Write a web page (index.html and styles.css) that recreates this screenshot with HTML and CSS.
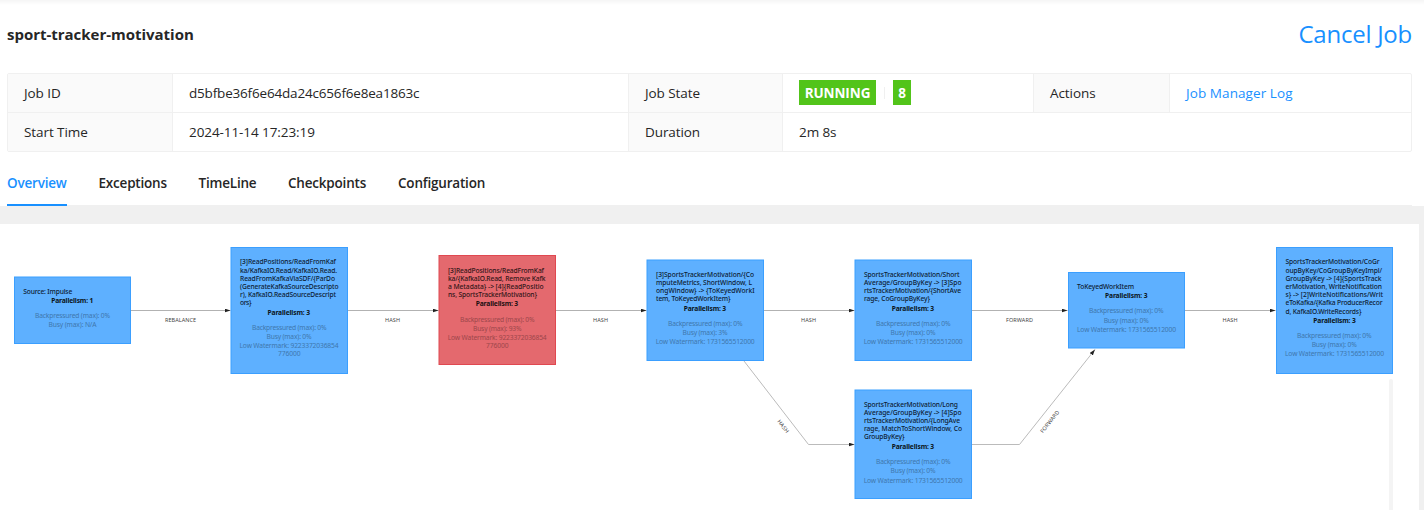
FILE: index.html
```html
<!DOCTYPE html>
<html lang="en">
<head>
<meta charset="utf-8">
<title>sport-tracker-motivation</title>
<link rel="stylesheet" href="styles.css">
</head>
<body>
<header class="job">
  <div class="job-head">
    <h1 class="job-name">sport-tracker-motivation</h1>
    <a class="cancel">Cancel Job</a>
  </div>
  <dl class="info">
    <dt class="label">Job ID</dt><dd class="value job-id">d5bfbe36f6e64da24c656f6e8ea1863c</dd>
    <dt class="label">Job State</dt>
    <dd class="value state"><span class="badge running">RUNNING</span><span class="divider"></span><span class="badge count">8</span></dd>
    <dt class="label">Actions</dt><dd class="value last"><a class="link">Job Manager Log</a></dd>
    <dt class="label">Start Time</dt><dd class="value start">2024-11-14 17:23:19</dd>
    <dt class="label">Duration</dt><dd class="value wide">2m 8s</dd>
  </dl>
  <nav class="tabs">
    <a class="tab active">Overview</a>
    <a class="tab t-exc">Exceptions</a>
    <a class="tab t-time">TimeLine</a>
    <a class="tab t-check">Checkpoints</a>
    <a class="tab t-conf">Configuration</a>
  </nav>
</header>
<main class="graph">
  <svg class="dag" width="1419" height="286" viewBox="0 224 1419 286">
    <defs>
      <marker id="arrow" viewBox="0 0 6 4" refX="6" refY="2" markerWidth="6" markerHeight="4" markerUnits="userSpaceOnUse" orient="auto"><path d="M0 0L6 2L0 4Z" fill="#222"/></marker>
    </defs>
    <g class="edges">
      <path d="M131 310.5H230.5"/>
      <path d="M348 310.5H438.5"/>
      <path d="M556 310.5H646.5"/>
      <path d="M764 310.5H854.5"/>
      <path d="M972 310.5H1067.5"/>
      <path d="M1185 310.5H1275.5"/>
      <path d="M744 361L808.500 444.500H854.500"/>
      <path d="M972 444.500H1019.500L1095 349.500"/>
    </g>
    <g class="edge-labels">
      <text x="165" y="322" textLength="31">REBALANCE</text>
      <text x="385" y="322" textLength="15">HASH</text>
      <text x="593" y="322" textLength="15">HASH</text>
      <text x="801" y="322" textLength="15">HASH</text>
      <text x="1006" y="322" textLength="27">FORWARD</text>
      <text x="1222.500" y="322" textLength="15">HASH</text>
      <text transform="translate(777 421.500) rotate(52.300)" textLength="15">HASH</text>
      <text transform="translate(1043 433.500) rotate(-51.500)" textLength="27">FORWARD</text>
    </g>
    <g class="node">
      <rect x="14.500" y="277" width="116" height="66.500"/>
      <text x="23.300" y="294" textLength="49">Source: Impulse</text>
      <text class="par" x="51.300" y="303" textLength="42">Parallelism: 1</text>
      <text class="stat" x="35" y="318" textLength="75">Backpressured (max): 0%</text>
      <text class="stat" x="48.500" y="327" textLength="48">Busy (max): N/A</text>
    </g>
    <g class="node">
      <rect x="231" y="247.500" width="116.500" height="126"/>
      <text x="240" y="264" textLength="96">[3]ReadPositions/ReadFromKaf</text>
      <text x="240" y="273" textLength="97">ka/KafkaIO.Read/KafkaIO.Read.</text>
      <text x="240" y="281" textLength="95">ReadFromKafkaViaSDF/{ParDo</text>
      <text x="240" y="289" textLength="98.500">(GenerateKafkaSourceDescripto</text>
      <text x="240" y="297" textLength="96">r), KafkaIO.ReadSourceDescript</text>
      <text x="240" y="305" textLength="11.500">ors}</text>
      <text class="par" x="267.500" y="315" textLength="42.500">Parallelism: 3</text>
      <text class="stat" x="252" y="330" textLength="74.500">Backpressured (max): 0%</text>
      <text class="stat" x="266.500" y="339" textLength="45">Busy (max): 0%</text>
      <text class="stat" x="239.500" y="348" textLength="99">Low Watermark: 9223372036854</text>
      <text class="stat" x="278" y="356" textLength="22.500">776000</text>
    </g>
    <g class="node busy">
      <rect x="439" y="255.500" width="116.500" height="109"/>
      <text x="448" y="273" textLength="96">[3]ReadPositions/ReadFromKaf</text>
      <text x="448" y="281" textLength="97.500">ka/{KafkaIO.Read, Remove Kafk</text>
      <text x="448" y="289" textLength="95.500">a Metadata} -&gt; [4]{ReadPositio</text>
      <text x="448" y="297" textLength="89">ns, SportsTrackerMotivation}</text>
      <text class="par" x="475.700" y="306" textLength="42.500">Parallelism: 3</text>
      <text class="stat" x="460" y="322" textLength="74.500">Backpressured (max): 0%</text>
      <text class="stat" x="473" y="331" textLength="48.500">Busy (max): 93%</text>
      <text class="stat" x="447.700" y="340" textLength="99">Low Watermark: 9223372036854</text>
      <text class="stat" x="486" y="348" textLength="22.500">776000</text>
    </g>
    <g class="node">
      <rect x="647" y="260" width="116.500" height="100.500"/>
      <text x="656" y="277" textLength="98">[3]SportsTrackerMotivation/{Co</text>
      <text x="656" y="285" textLength="96">mputeMetrics, ShortWindow, L</text>
      <text x="656" y="293" textLength="98.500">ongWindow} -&gt; {ToKeyedWorkI</text>
      <text x="656" y="301" textLength="74.500">tem, ToKeyedWorkItem}</text>
      <text class="par" x="683.700" y="311" textLength="42.500">Parallelism: 3</text>
      <text class="stat" x="668" y="326" textLength="74.500">Backpressured (max): 0%</text>
      <text class="stat" x="682.500" y="335" textLength="45">Busy (max): 3%</text>
      <text class="stat" x="655.700" y="344" textLength="99">Low Watermark: 1731565512000</text>
    </g>
    <g class="node">
      <rect x="855" y="260" width="116.500" height="100.500"/>
      <text x="864" y="277" textLength="95.500">SportsTrackerMotivation/Short</text>
      <text x="864" y="285" textLength="97.500">Average/GroupByKey -&gt; [3]Spo</text>
      <text x="864" y="293" textLength="97">rtsTrackerMotivation/{ShortAve</text>
      <text x="864" y="301" textLength="66">rage, CoGroupByKey}</text>
      <text class="par" x="891.700" y="311" textLength="42.500">Parallelism: 3</text>
      <text class="stat" x="876" y="326" textLength="74.500">Backpressured (max): 0%</text>
      <text class="stat" x="890.500" y="335" textLength="45">Busy (max): 0%</text>
      <text class="stat" x="863.700" y="344" textLength="99">Low Watermark: 1731565512000</text>
    </g>
    <g class="node">
      <rect x="855" y="390" width="116.500" height="108.500"/>
      <text x="864" y="407" textLength="94">SportsTrackerMotivation/Long</text>
      <text x="864" y="415" textLength="97.500">Average/GroupByKey -&gt; [4]Spo</text>
      <text x="864" y="423" textLength="96">rtsTrackerMotivation/{LongAve</text>
      <text x="864" y="431" textLength="98">rage, MatchToShortWindow, Co</text>
      <text x="864" y="439" textLength="40.500">GroupByKey}</text>
      <text class="par" x="891.700" y="449" textLength="42.500">Parallelism: 3</text>
      <text class="stat" x="876" y="464" textLength="74.500">Backpressured (max): 0%</text>
      <text class="stat" x="890.500" y="473" textLength="45">Busy (max): 0%</text>
      <text class="stat" x="863.700" y="483" textLength="99">Low Watermark: 1731565512000</text>
    </g>
    <g class="node">
      <rect x="1068.500" y="272.500" width="116" height="75.500"/>
      <text x="1077" y="289" textLength="57">ToKeyedWorkItem</text>
      <text class="par" x="1105" y="298" textLength="42.500">Parallelism: 3</text>
      <text class="stat" x="1089" y="313" textLength="74.500">Backpressured (max): 0%</text>
      <text class="stat" x="1103.700" y="323" textLength="45">Busy (max): 0%</text>
      <text class="stat" x="1077" y="332" textLength="99">Low Watermark: 1731565512000</text>
    </g>
    <g class="node">
      <rect x="1276.500" y="247.500" width="116" height="126"/>
      <text x="1285.500" y="264" textLength="94">SportsTrackerMotivation/CoGr</text>
      <text x="1285.500" y="273" textLength="96.500">oupByKey/CoGroupByKeyImpl/</text>
      <text x="1285.500" y="281" textLength="96">GroupByKey -&gt; [4]{SportsTrack</text>
      <text x="1285.500" y="289" textLength="96.500">erMotivation, WriteNotification</text>
      <text x="1285.500" y="297" textLength="97.500">s} -&gt; [2]WriteNotifications/Writ</text>
      <text x="1285.500" y="305" textLength="97">eToKafka/{Kafka ProducerRecor</text>
      <text x="1285.500" y="314" textLength="76">d, KafkaIO.WriteRecords}</text>
      <text class="par" x="1313.300" y="323" textLength="42.500">Parallelism: 3</text>
      <text class="stat" x="1297" y="338" textLength="74.500">Backpressured (max): 0%</text>
      <text class="stat" x="1311.700" y="347" textLength="45">Busy (max): 0%</text>
      <text class="stat" x="1285" y="356" textLength="99">Low Watermark: 1731565512000</text>
    </g>
    <rect class="slider" x="1389" y="379" width="4" height="140" rx="2"/>
  </svg>
</main>
</body>
</html>
```
FILE: styles.css
```css
* { box-sizing: border-box; }
body {
  margin: 0;
  height: 510px;
  overflow: hidden;
  background: #f0f0f0;
  color: #262626;
  font: 14px/22px "Open Sans", "Noto Sans", sans-serif;
}
.job {
  height: 206px;
  padding: 0 12px 0 7px;
  background: linear-gradient(#f5f5f5, #fff 5px);
}
.job-head {
  display: flex;
  align-items: center;
  justify-content: space-between;
  height: 73px;
  padding-bottom: 6px;
}
.job-name { margin: 0; font-size: 15px; font-weight: 700; letter-spacing: -0.02px; }
.cancel { color: #1890ff; font-size: 24px; line-height: 32px; letter-spacing: -0.25px; }
.info {
  display: grid;
  grid-template-columns: 165px 456px 154px 251px 136px 1fr;
  grid-template-rows: 39px 38px;
  margin: 0;
  height: 79px;
  border: 1px solid #f0f0f0;
  border-radius: 2px;
}
.label, .value {
  display: flex;
  align-items: center;
  margin: 0;
  padding: 0 16px 0 16px;
  border-right: 1px solid #f0f0f0;
  border-bottom: 1px solid #f0f0f0;
  font-size: 13.5px;
  letter-spacing: -0.08px;
  white-space: nowrap;
}
.label { background: #fafafa; }
.label:nth-last-of-type(-n+2), .start, .wide { border-bottom: 0; }
.job-id { letter-spacing: -0.18px; }
.last, .wide { border-right: 0; }
.wide { grid-column: 4 / 7; }
.link { color: #1890ff; letter-spacing: 0.08px; }
.state { padding-bottom: 1px; }
.badge {
  height: 25px;
  padding: 2px 0;
  background: #52c41a;
  color: #fff;
  font-weight: 700;
  text-align: center;
}
.running { width: 77px; }
.count { width: 18px; }
.divider { width: 1px; height: 12px; margin: 0 8px; background: #f0f0f0; }
.tabs {
  display: flex;
  gap: 32px;
  height: 54px;
  border-bottom: 1px solid #f0f0f0;
}
.tab {
  width: 59.5px;
  height: 54px;
  padding-top: 20px;
  font-size: 13.5px;
  font-weight: 600;
  letter-spacing: -0.2px;
  white-space: nowrap;
}
.t-exc { width: 68px; }
.t-time { width: 57.5px; }
.t-check { width: 78px; }
.t-conf { width: 88px; }
.active { color: #1890ff; border-bottom: 2px solid #1890ff; }
.graph { width: 1419px; height: 286px; margin-top: 18px; background: #fff; }
.dag { display: block; font-family: "Noto Sans", sans-serif; font-size: 6.7px; }
.edges path { fill: none; stroke: #b2b2b2; stroke-width: 1; marker-end: url(#arrow); }
.edges path:nth-child(n+7) { stroke: #bbb; }
.edge-labels { font-size: 5.5px; fill: #444; }
.node rect { fill: #5eb0ff; stroke: #3b9fff; stroke-width: 1; }
.node text { fill: #0d2033; font-weight: 500; }
.node .par { fill: #0b1520; font-weight: 700; }
.node .stat { fill: #3f77ad; font-weight: 400; }
.busy rect { fill: #e4696e; stroke: #e04850; }
.busy text { fill: #301518; }
.busy .par { fill: #201012; }
.busy .stat { fill: #9c474b; }
.dag .slider { fill: #f4f4f4; }
```
